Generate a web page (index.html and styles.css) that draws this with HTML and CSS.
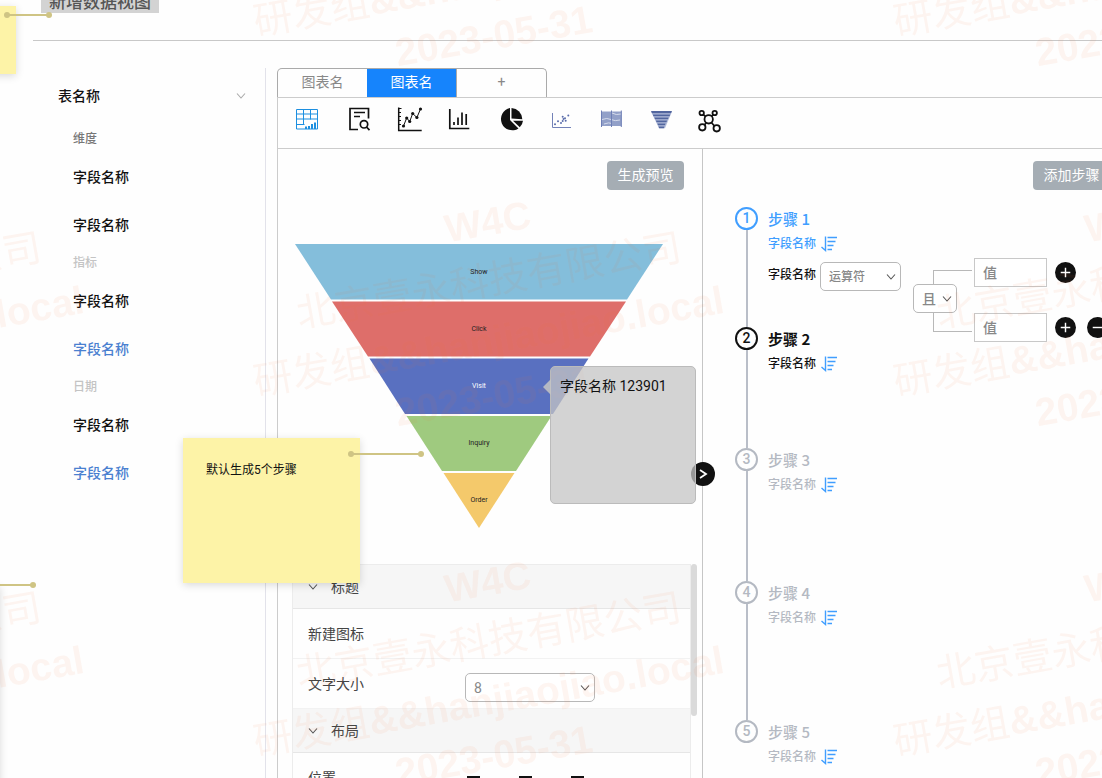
FILE: index.html
```html
<!DOCTYPE html>
<html lang="zh-CN">
<head>
<meta charset="utf-8">
<title>新增数据视图</title>
<link rel="stylesheet" href="styles.css">
</head>
<body>
<svg class="defs" aria-hidden="true">
  <symbol id="chevron" viewBox="0 0 12 12"><path d="M2 3.500l4 4.500 4-4.500" fill="none" stroke="currentColor" stroke-width="1.100"/></symbol>
  <symbol id="sort" viewBox="0 0 16 16"><path d="M4.500 0.500v14L0.500 11" fill="none" stroke="currentColor" stroke-width="1.400"/><path d="M6.500 1.500h9.500M6.500 5.500h8M6.500 9.500h6M6.500 13.500h4.500" fill="none" stroke="currentColor" stroke-width="1.500"/></symbol>
</svg>
<div class="page">
  <header class="header"><h1 class="title">新增数据视图</h1></header>

  <div class="workspace">
    <aside class="sidebar">
      <div class="table-head">
        <h2 class="table-name">表名称</h2>
        <svg class="chevron chevron-light"><use href="#chevron"/></svg>
      </div>
      <h3 class="group-label group-label-dark">维度</h3>
      <ul class="fields"><li>字段名称</li><li>字段名称</li></ul>
      <h3 class="group-label">指标</h3>
      <ul class="fields"><li>字段名称</li><li class="is-blue">字段名称</li></ul>
      <h3 class="group-label">日期</h3>
      <ul class="fields"><li>字段名称</li><li class="is-blue">字段名称</li></ul>
    </aside>

    <main class="main">
      <nav class="tabs">
        <button class="tab" type="button">图表名</button>
        <button class="tab tab-active" type="button">图表名</button>
        <button class="tab" type="button" aria-label="新增图表">+</button>
      </nav>

      <div class="toolbar">
        <button class="tool" type="button" aria-label="表格">
          <svg viewBox="289 106 40 28" fill="none" stroke="#1c8fe0"><path d="M296.500 109.500h21v19.500h-21zM296.500 114h21M296.500 119h21M296.500 124.500h8M303.500 109.500v15M310.500 109.500v10"/><path d="M306 129v-2.500M309 129v-3M312 129v-5M315 129v-6.500" stroke-width="2"/></svg>
        </button>
        <button class="tool" type="button" aria-label="明细">
          <svg viewBox="339 106 40 28" fill="none" stroke="#111" stroke-width="1.700"><path d="M358 129.500h-8v-21h18.500v10"/><path d="M354 112.500h11M354 116.500h6"/><circle cx="364" cy="124.300" r="3.700"/><path d="M366.500 127l3 3.200"/></svg>
        </button>
        <button class="tool" type="button" aria-label="折线图">
          <svg viewBox="389 106 40 28" fill="none" stroke="#111"><path d="M398.700 107.500v23h23" stroke-width="1.500"/><path d="M399 108.500h2.500M399 112.500h2M399 116.500h2M399 120.500h2M399 124.500h2"/><path d="M403.500 126l3.200-8 3 3.500 3-8 4.200 4 3.600-8.500"/><g fill="#111" stroke="none"><circle cx="403.500" cy="126" r="1.600"/><circle cx="406.700" cy="118" r="1.600"/><circle cx="409.700" cy="121.500" r="1.600"/><circle cx="412.700" cy="113.500" r="1.600"/><circle cx="416.900" cy="117.500" r="1.600"/><circle cx="420.500" cy="109" r="1.600"/></g></svg>
        </button>
        <button class="tool" type="button" aria-label="柱状图">
          <svg viewBox="439 106 40 28" fill="none" stroke="#111" stroke-width="1.700"><path d="M449.800 109v19.500h19.500"/><path d="M454 125v-3M458 125v-7.500M462 125v-12.500M466.200 125v-11"/></svg>
        </button>
        <button class="tool" type="button" aria-label="饼图">
          <svg viewBox="490 106 40 28"><path d="M511 108v12l8.500 8.500a11.300 11.300 0 1 1-8.500-20.500z" fill="#111"/><path d="M512.500 108a11.300 11.300 0 0 1 10.800 11.200L512.500 118.500z" fill="#111"/><path d="M514 120.700h10a11 11 0 0 1-3.200 6.500z" fill="#111"/></svg>
        </button>
        <button class="tool" type="button" aria-label="散点图">
          <svg viewBox="539 106 40 28"><path d="M552.500 113v14.500h18.500" fill="none" stroke="#7382b8"/><g fill="#5a6cab"><circle cx="555" cy="124.300" r="1"/><circle cx="558" cy="121.300" r="1"/><circle cx="561" cy="123" r="1"/><circle cx="562.700" cy="121" r="1"/><circle cx="565.700" cy="120.800" r="1"/><circle cx="562.700" cy="116.700" r="1"/><circle cx="565" cy="118.300" r="1"/><circle cx="563.500" cy="119" r="1"/><circle cx="568.300" cy="115.500" r="1"/></g></svg>
        </button>
        <button class="tool" type="button" aria-label="平行坐标">
          <svg viewBox="589 106 40 28"><path d="M601.500 111.500h20v14.500h-20z" fill="#92a0c8"/><path d="M612 113q4 2.500 9 1M602 119.500q5-2 9 0t9 .5M604 124q5-2 8-.5" stroke="#d6dcec" fill="none"/><path d="M601.500 110.500v16.500M611.500 110.500v16.500M621.300 110.500v16.500" stroke="#6e7fb6"/></svg>
        </button>
        <button class="tool" type="button" aria-label="漏斗图">
          <svg viewBox="639 106 40 28"><path d="M651 111.500h21L665 128.300h-6z" fill="#b4bedb"/><path d="M651 111h21l-1 2.300h-19zM652.700 114.500h17.600l-.8 1.800h-16zM654.300 117.500h14.400l-.8 1.800h-12.800zM655.800 120.500h11.400l-.8 1.800h-9.800zM657.300 123.500h8.400l-.8 1.800h-6.800zM658.500 126.500h6l-.7 1.800h-4.600z" fill="#52669f"/></svg>
        </button>
        <button class="tool" type="button" aria-label="关系图">
          <svg viewBox="689 106 40 28" fill="none" stroke="#111" stroke-width="1.800"><circle cx="708.700" cy="119.300" r="4.200"/><circle cx="701.700" cy="113" r="2.200"/><circle cx="714.700" cy="113" r="2.200"/><circle cx="702.300" cy="127.300" r="3.200"/><circle cx="716.700" cy="128.300" r="3.200"/><path d="M703.300 114.600l2.300 1.900M713.200 114.700l-1.600 1.600M704.500 125l1.700-2.200M714.400 126l-3-3.500"/></svg>
        </button>
      </div>

      <div class="panes">
        <section class="preview">
          <div class="pane-actions"><button class="btn" type="button">生成预览</button></div>
          <figure class="funnel">
            <svg class="funnel-chart" viewBox="0 0 368 284" role="img" aria-label="漏斗图">
              <path d="M0 0H368L332 55.500H36z" fill="#84bedb"/>
              <path d="M37 57.500H331L295 112.500H73z" fill="#de6e6a"/>
              <path d="M74.500 114.500H293.500L258 170H110z" fill="#5970c0"/>
              <path d="M111.500 172H256.500L221 227H147z" fill="#9fca7f"/>
              <path d="M148.500 229H219.500L184 284z" fill="#f4c96b"/>
              <g class="funnel-text">
                <text x="184" y="30">Show</text>
                <text x="184" y="87">Click</text>
                <text x="184" y="144" fill="#fff">Visit</text>
                <text x="184" y="201">Inquiry</text>
                <text x="184" y="258">Order</text>
              </g>
            </svg>
            <figcaption class="tooltip">字段名称 123901</figcaption>
          </figure>

          <form class="settings">
            <div class="settings-body">
              <h3 class="settings-head"><svg class="chevron"><use href="#chevron"/></svg>标题</h3>
              <div class="settings-row">新建图标</div>
              <div class="settings-row">
                <label class="settings-label" for="size">文字大小</label>
                <span class="select select-wide"><select id="size"><option>8</option></select><svg class="chevron"><use href="#chevron"/></svg></span>
              </div>
              <h3 class="settings-head"><svg class="chevron"><use href="#chevron"/></svg>布局</h3>
              <div class="settings-row">
                <span class="settings-label">位置</span>
                <span class="aligns">
                  <button type="button" aria-label="左对齐"><svg viewBox="0 0 16 14"><path d="M2 6h13M2 10h8" stroke="#111" stroke-width="2"/></svg></button>
                  <button type="button" aria-label="居中"><svg viewBox="0 0 16 14"><path d="M2 6h13M4 10h9" stroke="#111" stroke-width="2"/></svg></button>
                  <button type="button" aria-label="右对齐"><svg viewBox="0 0 16 14"><path d="M2 6h13M7 10h8" stroke="#111" stroke-width="2"/></svg></button>
                </span>
              </div>
            </div>
            <div class="scrollbar"></div>
          </form>
          <button class="collapse" type="button" aria-label="收起"><svg viewBox="0 0 24 24"><path d="M9 8l6 4-6 4" fill="none" stroke="#fff" stroke-width="1.800"/></svg></button>
        </section>

        <section class="config">
          <div class="pane-actions"><button class="btn" type="button">添加步骤</button></div>
          <ol class="steps">
            <li class="step step-active">
              <span class="marker">1</span>
              <div>
                <h3 class="step-title">步骤 1</h3>
                <p class="step-field">字段名称<svg class="sort"><use href="#sort"/></svg></p>
                <div class="condition">
                  <label class="condition-label" for="op">字段名称</label>
                  <span class="select select-op"><select id="op"><option>运算符</option></select><svg class="chevron"><use href="#chevron"/></svg></span>
                  <div class="bracket">
                    <span class="select select-logic"><select aria-label="逻辑"><option>且</option></select><svg class="chevron"><use href="#chevron"/></svg></span>
                  </div>
                  <div class="values">
                    <div class="value-row">
                      <input type="text" placeholder="值" aria-label="值 1">
                      <button class="round" type="button" aria-label="添加"><svg viewBox="0 0 22 22"><path d="M6 11h10M11 6v10" stroke="#fff" stroke-width="1.500"/></svg></button>
                    </div>
                    <div class="value-row">
                      <input type="text" placeholder="值" aria-label="值 2">
                      <button class="round" type="button" aria-label="添加"><svg viewBox="0 0 22 22"><path d="M6 11h10M11 6v10" stroke="#fff" stroke-width="1.500"/></svg></button>
                      <button class="round" type="button" aria-label="删除"><svg viewBox="0 0 22 22"><path d="M6 11h10" stroke="#fff" stroke-width="1.500"/></svg></button>
                    </div>
                  </div>
                </div>
              </div>
            </li>
            <li class="step step-current">
              <span class="marker">2</span>
              <div><h3 class="step-title">步骤 2</h3><p class="step-field">字段名称<svg class="sort"><use href="#sort"/></svg></p></div>
            </li>
            <li class="step">
              <span class="marker">3</span>
              <div><h3 class="step-title">步骤 3</h3><p class="step-field">字段名称<svg class="sort"><use href="#sort"/></svg></p></div>
            </li>
            <li class="step">
              <span class="marker">4</span>
              <div><h3 class="step-title">步骤 4</h3><p class="step-field">字段名称<svg class="sort"><use href="#sort"/></svg></p></div>
            </li>
            <li class="step">
              <span class="marker">5</span>
              <div><h3 class="step-title">步骤 5</h3><p class="step-field">字段名称<svg class="sort"><use href="#sort"/></svg></p></div>
            </li>
          </ol>
        </section>
      </div>
    </main>
  </div>

  <svg class="watermark" aria-hidden="true">
    <defs>
      <pattern id="mark" width="640" height="360" patternUnits="userSpaceOnUse" patternTransform="translate(170 140)">
        <g class="watermark-text">
          <text transform="translate(320 95) rotate(-10)">W4C</text>
          <text transform="translate(321 154) rotate(-10)">北京壹永科技有限公司</text>
          <text transform="translate(321 214) rotate(-10)"><tspan class="watermark-thin">研发组</tspan>&amp;&amp;hanjiaojiao.local</text>
          <text transform="translate(326 269) rotate(-10)">2023-05-31</text>
        </g>
      </pattern>
    </defs>
    <rect width="100%" height="100%" fill="url(#mark)"/>
  </svg>

  <div class="note note-corner"></div>
  <div class="note note-main">默认生成5个步骤</div>
  <div class="note note-edge"></div>
  <div class="link link-corner"></div>
  <div class="link link-main"></div>
  <div class="link link-edge"></div>
</div>
</body>
</html>
```
FILE: styles.css
```css
* { box-sizing: border-box; }
body {
  margin: 0;
  background: #fefefe;
  color: #111;
  font: 14px/24px Roboto, "Noto Sans CJK SC", sans-serif;
}
h1, h2, h3, p, ul, ol, figure { margin: 0; padding: 0; font-weight: 500; }
ul, ol { list-style: none; }
button, input, select { font: inherit; color: inherit; margin: 0; }
button { border: 0; padding: 0; background: none; cursor: pointer; }
svg { display: block; flex: none; }
.defs { position: absolute; width: 0; height: 0; }

.page { position: relative; height: 100vh; overflow: hidden; }

.header { display: flex; align-items: flex-end; height: 41px; margin-left: 33px; padding: 0 0 27px 8px; border-bottom: 1px solid #c8c8c8; }
.title { padding: 0 8px; background: #d3d3d3; color: #555; font-size: 17px; line-height: 22px; }

.workspace { display: grid; grid-template-columns: 233px 1fr; column-gap: 11px; min-height: calc(100vh - 41px); margin-left: 33px; padding-top: 27px; }

.sidebar { border-right: 1px solid #e2e2ea; }
.table-head { display: flex; align-items: center; justify-content: space-between; height: 56px; padding: 0 18px 0 25px; }
.table-name { font-size: 14px; }
.group-label { padding: 2px 0 0 40px; color: #c4c4c4; font-size: 12px; line-height: 27px; }
.group-label-dark { color: #777; }
.fields { padding-left: 40px; font-weight: 500; line-height: 48px; }
.fields li { height: 48px; }
.fields li:last-child { height: 47px; }
.is-blue { color: #4a80d0; }

.chevron { width: 12px; height: 12px; color: #555; }
.chevron-light { color: #aaa; }

.main { display: grid; grid-template-rows: auto auto 1fr; }
.tabs { display: flex; width: 270px; border: 1px solid #aaa; border-bottom: 0; border-radius: 5px 5px 0 0; overflow: hidden; }
.tab { flex: 1; height: 28px; padding-bottom: 2px; color: #888; }
.tab:last-child { border-left: 1px solid #aaa; }
.tab-active { background: #1684fc; color: #fff; }

.toolbar { display: flex; padding: 8px 6px 14px; border: 1px solid #ccc; border-right: 0; height: 52px; }
.tool { display: grid; place-items: center; width: 50px; height: 28px; }
.tool svg { width: 40px; height: 28px; }

.panes { display: grid; grid-template-columns: 425px minmax(427px, 1fr); border-left: 1px solid #ccc; }
.preview { position: relative; border-right: 1px solid #c6c6c6; padding: 0 5px 0 14px; }
.config { padding-left: 32px; }
.pane-actions { display: flex; justify-content: flex-end; padding: 12px 13px 0 0; }
.config .pane-actions { padding-right: 20px; }
.btn { width: 77px; height: 29px; padding-bottom: 2px; border-radius: 4px; background: #a5adb4; color: #fff; }

.funnel { position: relative; margin: 54px 34px 36px 3px; }
.funnel-chart { width: 100%; height: auto; }
.funnel-text { font: 7px Roboto, sans-serif; fill: #222; text-anchor: middle; }
.tooltip { position: absolute; z-index: 3; top: 122px; right: -33px; width: 146px; height: 138px; padding: 7px 9px; border: 1px solid #bbb; border-radius: 5px; background: rgba(196, 196, 196, .75); font-weight: 400; white-space: nowrap; }
.tooltip::before { content: ""; position: absolute; top: 12px; right: 100%; border: 8px solid transparent; border-left: 0; border-right-color: rgba(196, 196, 196, .85); }

.collapse { position: absolute; z-index: 1; top: 313px; right: -13px; width: 24px; height: 24px; border-radius: 50%; background: #111; }

.settings { display: flex; align-items: flex-start; color: #444; }
.settings-body { flex: 1; border: 1px solid #ececec; }
.settings-head { display: flex; align-items: center; gap: 12px; height: 44px; padding-left: 14px; border-bottom: 1px solid #e6e6e6; background: #f6f6f6; font-size: 14px; font-weight: 400; }
.settings-row { display: flex; align-items: center; height: 50px; padding-left: 15px; border-bottom: 1px solid #f2f2f2; }
.settings-label { width: 157px; }
.scrollbar { width: 6px; height: 152px; border-radius: 3px; background: #dadada; }
.aligns { display: flex; gap: 36px; }
.aligns svg { width: 16px; height: 14px; }

.select { position: relative; display: block; height: 29px; }
.select select { appearance: none; width: 100%; height: 100%; padding: 0 8px; border: 1px solid #b8b8b8; border-radius: 5px; background: #fff; color: #888; }
.select .chevron { position: absolute; top: 9px; right: 4px; }
.select-wide { width: 130px; margin-top: 8px; }
.select-op { width: 81px; font-size: 12px; }
.select-logic { position: absolute; top: 13px; left: -21px; width: 44px; }

.steps { display: grid; grid-template-rows: 120px 121px 133px 139px auto; margin-top: 17px; }
.step { position: relative; display: grid; grid-template-columns: 24px 1fr; column-gap: 9px; color: #b4b9c2; }
.step:not(:last-child)::before { content: ""; position: absolute; top: 23px; bottom: 0; left: 11px; width: 2px; background: #b9bec8; }
.marker { width: 23px; height: 23px; border: 2px solid; border-radius: 50%; text-align: center; line-height: 19px; }
.step-active { color: #409eff; }
.step-current { color: #111; }
.step-title { font-family: "Noto Sans CJK SC", sans-serif; font-size: 15px; line-height: 23px; }
.step-current .step-title { font-weight: 700; }
.step-field { display: flex; align-items: center; gap: 5px; height: 28px; font-size: 12px; }
.sort { width: 16px; height: 16px; color: #409eff; }

.condition { display: flex; align-items: flex-start; height: 0; }
.condition-label { width: 52px; color: #111; font-size: 12px; font-weight: 500; line-height: 26px; }
.condition-label, .select-op { margin-top: 4px; }
.bracket { position: relative; width: 39px; height: 62px; margin: 12px 2px 0 32px; border: 1px solid #b8b8b8; border-right: 0; }
.values { display: grid; row-gap: 26px; }
.value-row { display: flex; align-items: center; gap: 8px; }
.value-row input { width: 73px; height: 29px; padding: 0 8px; border: 1px solid #c8c8c8; background: #fff; }
.value-row input::placeholder { color: #888; opacity: 1; }
.round { flex: none; width: 21px; height: 21px; border-radius: 50%; background: #111; }
.value-row .round + .round { margin-left: 3px; }

.watermark { position: absolute; z-index: 2; inset: 0; width: 100%; height: 100%; pointer-events: none; }
.watermark-text { font: 700 39px "Liberation Sans", "Noto Sans CJK SC", sans-serif; fill: rgba(240, 100, 50, .065); text-anchor: middle; }
.watermark-text text:nth-child(2), .watermark-thin { font-weight: 400; }

.note { position: absolute; z-index: 4; background: #fdf3a7; box-shadow: 0 2px 8px rgba(0, 0, 0, .15); font-size: 12px; }
.note-corner { top: 6px; left: -160px; width: 176px; height: 68px; }
.note-main { top: 438px; left: 183px; width: 177px; height: 145px; padding: 20px 23px; }
.note-edge { top: 585px; left: -176px; width: 176px; height: 220px; }
.link { position: absolute; z-index: 5; height: 2px; background: #cfc484; }
.link::before, .link::after { content: ""; position: absolute; top: -2px; width: 6px; height: 6px; border-radius: 50%; background: #cfc484; }
.link::before { left: -3px; }
.link::after { right: -3px; }
.link-corner { top: 14px; left: 7px; width: 42px; }
.link-main { top: 453px; left: 351px; width: 70px; }
.link-edge { top: 584px; left: -36px; width: 69px; }
```
